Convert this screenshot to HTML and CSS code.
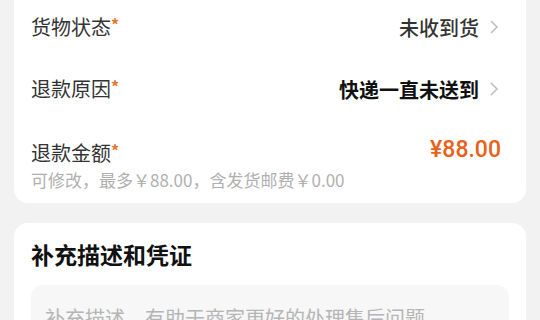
FILE: index.html
```html
<!DOCTYPE html>
<html lang="zh">
<head>
<meta charset="utf-8">
<link rel="stylesheet" href="styles.css">
</head>
<body>
<div class="page">
  <div class="card card-form">
    <div class="row">
      <div class="label">货物状态<span class="star">*</span></div>
      <div class="value">未收到货<svg class="chev" viewBox="0 0 10 16" width="10" height="16"><path d="M2 2 L8 8 L2 14" fill="none" stroke="#bdbdbd" stroke-width="1.5"/></svg></div>
    </div>
    <div class="row">
      <div class="label">退款原因<span class="star">*</span></div>
      <div class="value strong">快递一直未送到<svg class="chev" viewBox="0 0 10 16" width="10" height="16"><path d="M2 2 L8 8 L2 14" fill="none" stroke="#bdbdbd" stroke-width="1.5"/></svg></div>
    </div>
    <div class="row-amount">
      <div class="amount-top">
        <div class="label">退款金额<span class="star">*</span></div>
        <div class="amount">¥88.00</div>
      </div>
      <div class="sub">可修改，最多￥88.00，含发货邮费￥0.00</div>
    </div>
  </div>
  <div class="card card-desc">
    <div class="title">补充描述和凭证</div>
    <div class="textarea">补充描述，有助于商家更好的处理售后问题</div>
  </div>
</div>
</body>
</html>
```
FILE: styles.css
```css
* { box-sizing: border-box; }
html, body { margin: 0; padding: 0; }
body {
  background: #f2f2f2;
  font-family: "Noto Sans CJK SC", "Noto Sans", sans-serif;
  width: 540px;
  height: 320px;
  overflow: hidden;
}
.page { padding: 0 14px; }
.card {
  background: #fff;
  border-radius: 14px;
}
.card-form {
  margin-top: -20px;
  padding: 16px 27px 13px 17px;
}
.row {
  height: 62px;
  display: flex;
  align-items: center;
  justify-content: space-between;
}
.label {
  font-size: 20px;
  line-height: 26px;
  color: #333;
}
.star {
  color: #e8742a;
  font-size: 16px;
  font-weight: 700;
  vertical-align: top;
  position: relative;
  top: -3px;
}
.value {
  display: flex;
  align-items: center;
  font-size: 20px;
  color: #333;
  font-weight: 500;
}
.value.strong { color: #111; font-weight: 700; }
.chev { margin-left: 10px; }
.row-amount { padding-top: 20px; }
.amount-top {
  display: flex;
  justify-content: space-between;
  align-items: center;
}
.amount {
  font-family: "Roboto", "Noto Sans", sans-serif;
  font-size: 23px;
  font-weight: 500;
  line-height: 26px;
  color: #e8621a;
  margin-right: -2px;
  margin-top: -6px;
}
.sub {
  margin-top: 4px;
  font-size: 17px;
  line-height: 20px;
  color: #b0b0b0;
}
.card-desc {
  margin-top: 20px;
  padding: 18px 17px 0;
  height: 200px;
}
.title {
  font-size: 23px;
  line-height: 26px;
  font-weight: 700;
  color: #111;
}
.textarea {
  margin-top: 18px;
  background: #f7f7f7;
  border-radius: 12px;
  padding: 20px 14px;
  font-size: 20px;
  line-height: 26px;
  color: #b5b5b5;
  height: 150px;
}
```
